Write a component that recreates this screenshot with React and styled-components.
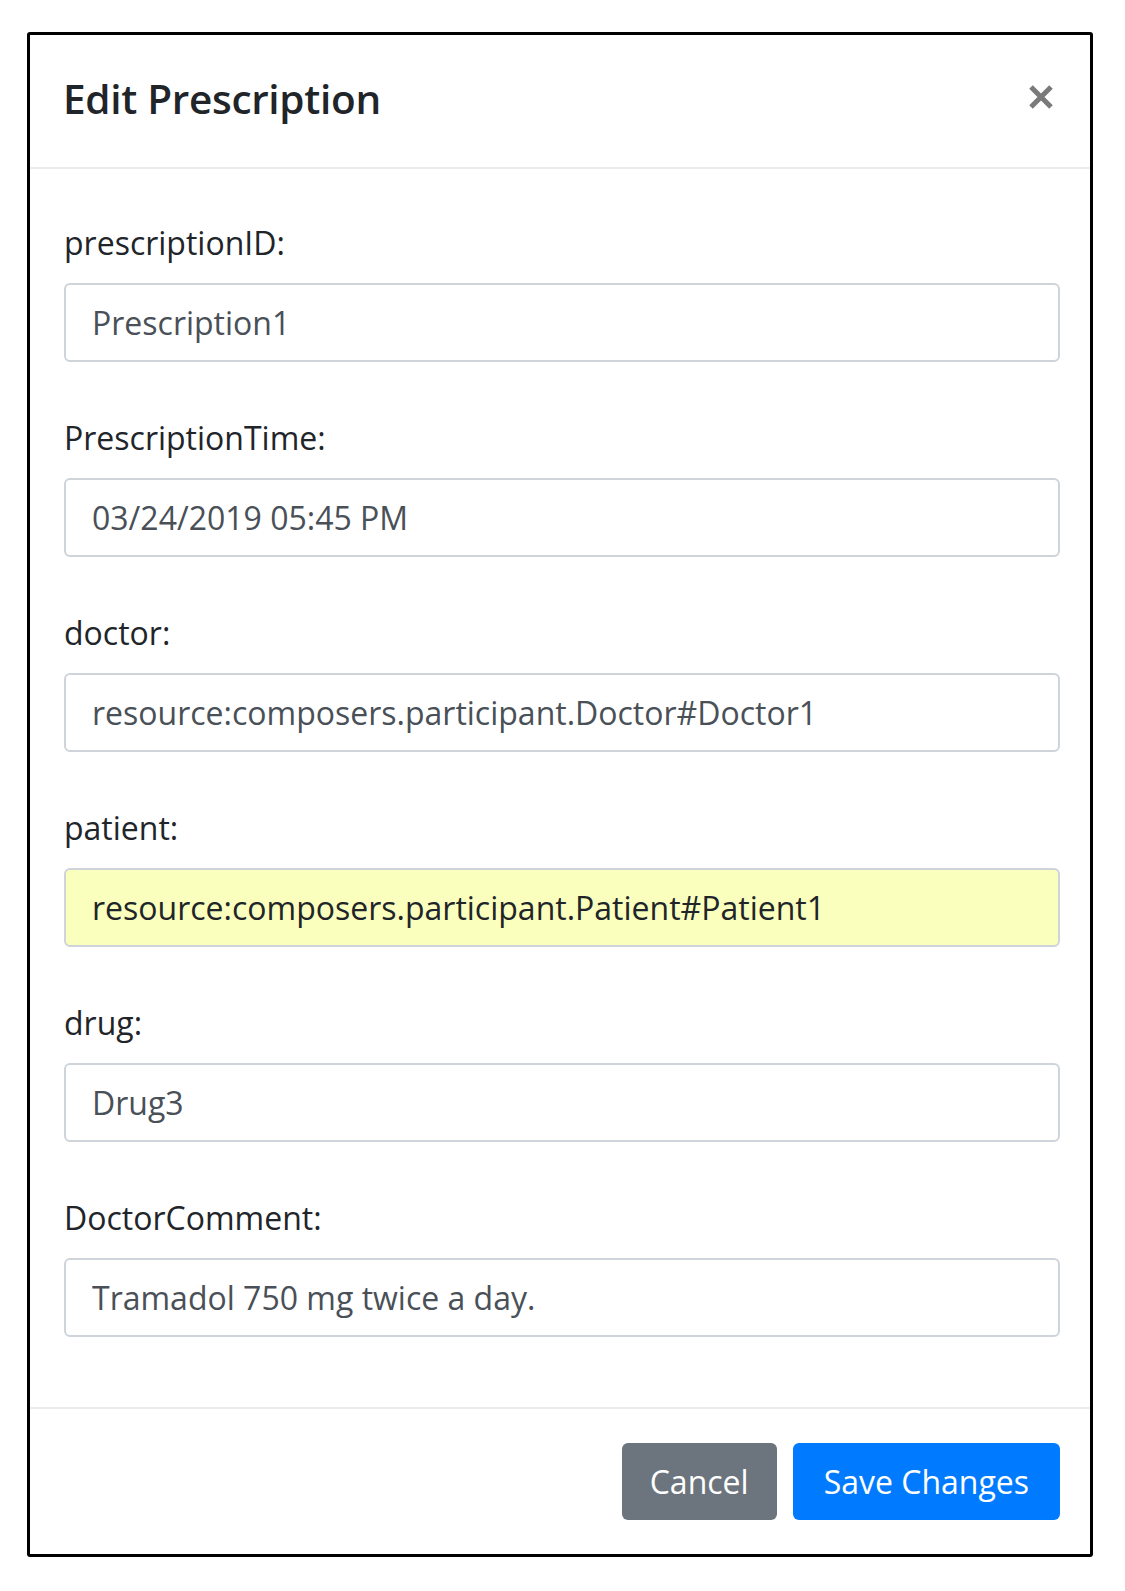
import React from "react";
import styled, { createGlobalStyle } from "styled-components";

const GlobalStyle = createGlobalStyle`
  body {
    margin: 0;
    background: #fff;
    font-family: "Open Sans", "Noto Sans", Arial, sans-serif;
  }
`;

const Page = styled.div`
  padding: 32px 0 0 27px;
`;

const Modal = styled.div`
  width: 1066px;
  box-sizing: border-box;
  border: 3px solid #000;
  border-radius: 3px;
  background: #fff;
`;

const Header = styled.div`
  height: 134px;
  box-sizing: border-box;
  display: flex;
  align-items: center;
  justify-content: space-between;
  padding: 0 36px 5px 33px;
  border-bottom: 2px solid #e9ecef;
`;

const Title = styled.h5`
  margin: 0;
  font-size: 40.5px;
  font-weight: 600;
  color: #212529;
  letter-spacing: -0.3px;
`;

const Close = styled.button`
  border: 0;
  background: none;
  padding: 0;
  width: 26px;
  height: 26px;
  cursor: pointer;
  display: flex;
  margin-top: -4px;
`;

const Body = styled.div`
  padding: 53px 30px 70px 34px;
`;

const Group = styled.div`
  margin-bottom: 55px;
  &:last-child {
    margin-bottom: 0;
  }
`;

const Label = styled.label`
  display: block;
  height: 42px;
  line-height: 42px;
  margin-bottom: 19px;
  font-size: 32px;
  color: #212529;
`;

const Input = styled.input`
  display: block;
  width: 996px;
  height: 79px;
  box-sizing: border-box;
  padding: 0 26px;
  border: 2px solid #ced4da;
  border-radius: 6px;
  font-family: inherit;
  font-size: 32px;
  color: ${(p) => (p.$filled ? "#212529" : "#495057")};
  background: ${(p) => (p.$filled ? "#faffbd" : "#fff")};
  outline: none;
`;

const Footer = styled.div`
  display: flex;
  justify-content: flex-end;
  gap: 16px;
  padding: 34px 30px 34px 0;
  border-top: 2px solid #e9ecef;
`;

const Button = styled.button`
  height: 77px;
  padding: 0 ${(p) => (p.$primary ? 31 : 28)}px;
  border: 0;
  border-radius: 6px;
  font-family: inherit;
  font-size: 32px;
  color: #fff;
  background: ${(p) => (p.$primary ? "#007bff" : "#6c757d")};
  cursor: pointer;
`;

const fields = [
  { label: "prescriptionID:", value: "Prescription1" },
  { label: "PrescriptionTime:", value: "03/24/2019 05:45 PM" },
  { label: "doctor:", value: "resource:composers.participant.Doctor#Doctor1" },
  { label: "patient:", value: "resource:composers.participant.Patient#Patient1", filled: true },
  { label: "drug:", value: "Drug3" },
  { label: "DoctorComment:", value: "Tramadol 750 mg twice a day." },
];

const App = () => {
  return (
    <Page>
      <GlobalStyle />
      <Modal>
        <Header>
          <Title>Edit Prescription</Title>
          <Close aria-label="Close">
            <svg width="26" height="26" viewBox="0 0 26 26">
              <path d="M3 3 L23 23 M23 3 L3 23" stroke="#7a7a7a" strokeWidth="5" />
            </svg>
          </Close>
        </Header>
        <Body>
          {fields.map((f) => (
            <Group key={f.label}>
              <Label>{f.label}</Label>
              <Input defaultValue={f.value} $filled={f.filled} />
            </Group>
          ))}
        </Body>
        <Footer>
          <Button>Cancel</Button>
          <Button $primary>Save Changes</Button>
        </Footer>
      </Modal>
    </Page>
  );
};

export default App;
